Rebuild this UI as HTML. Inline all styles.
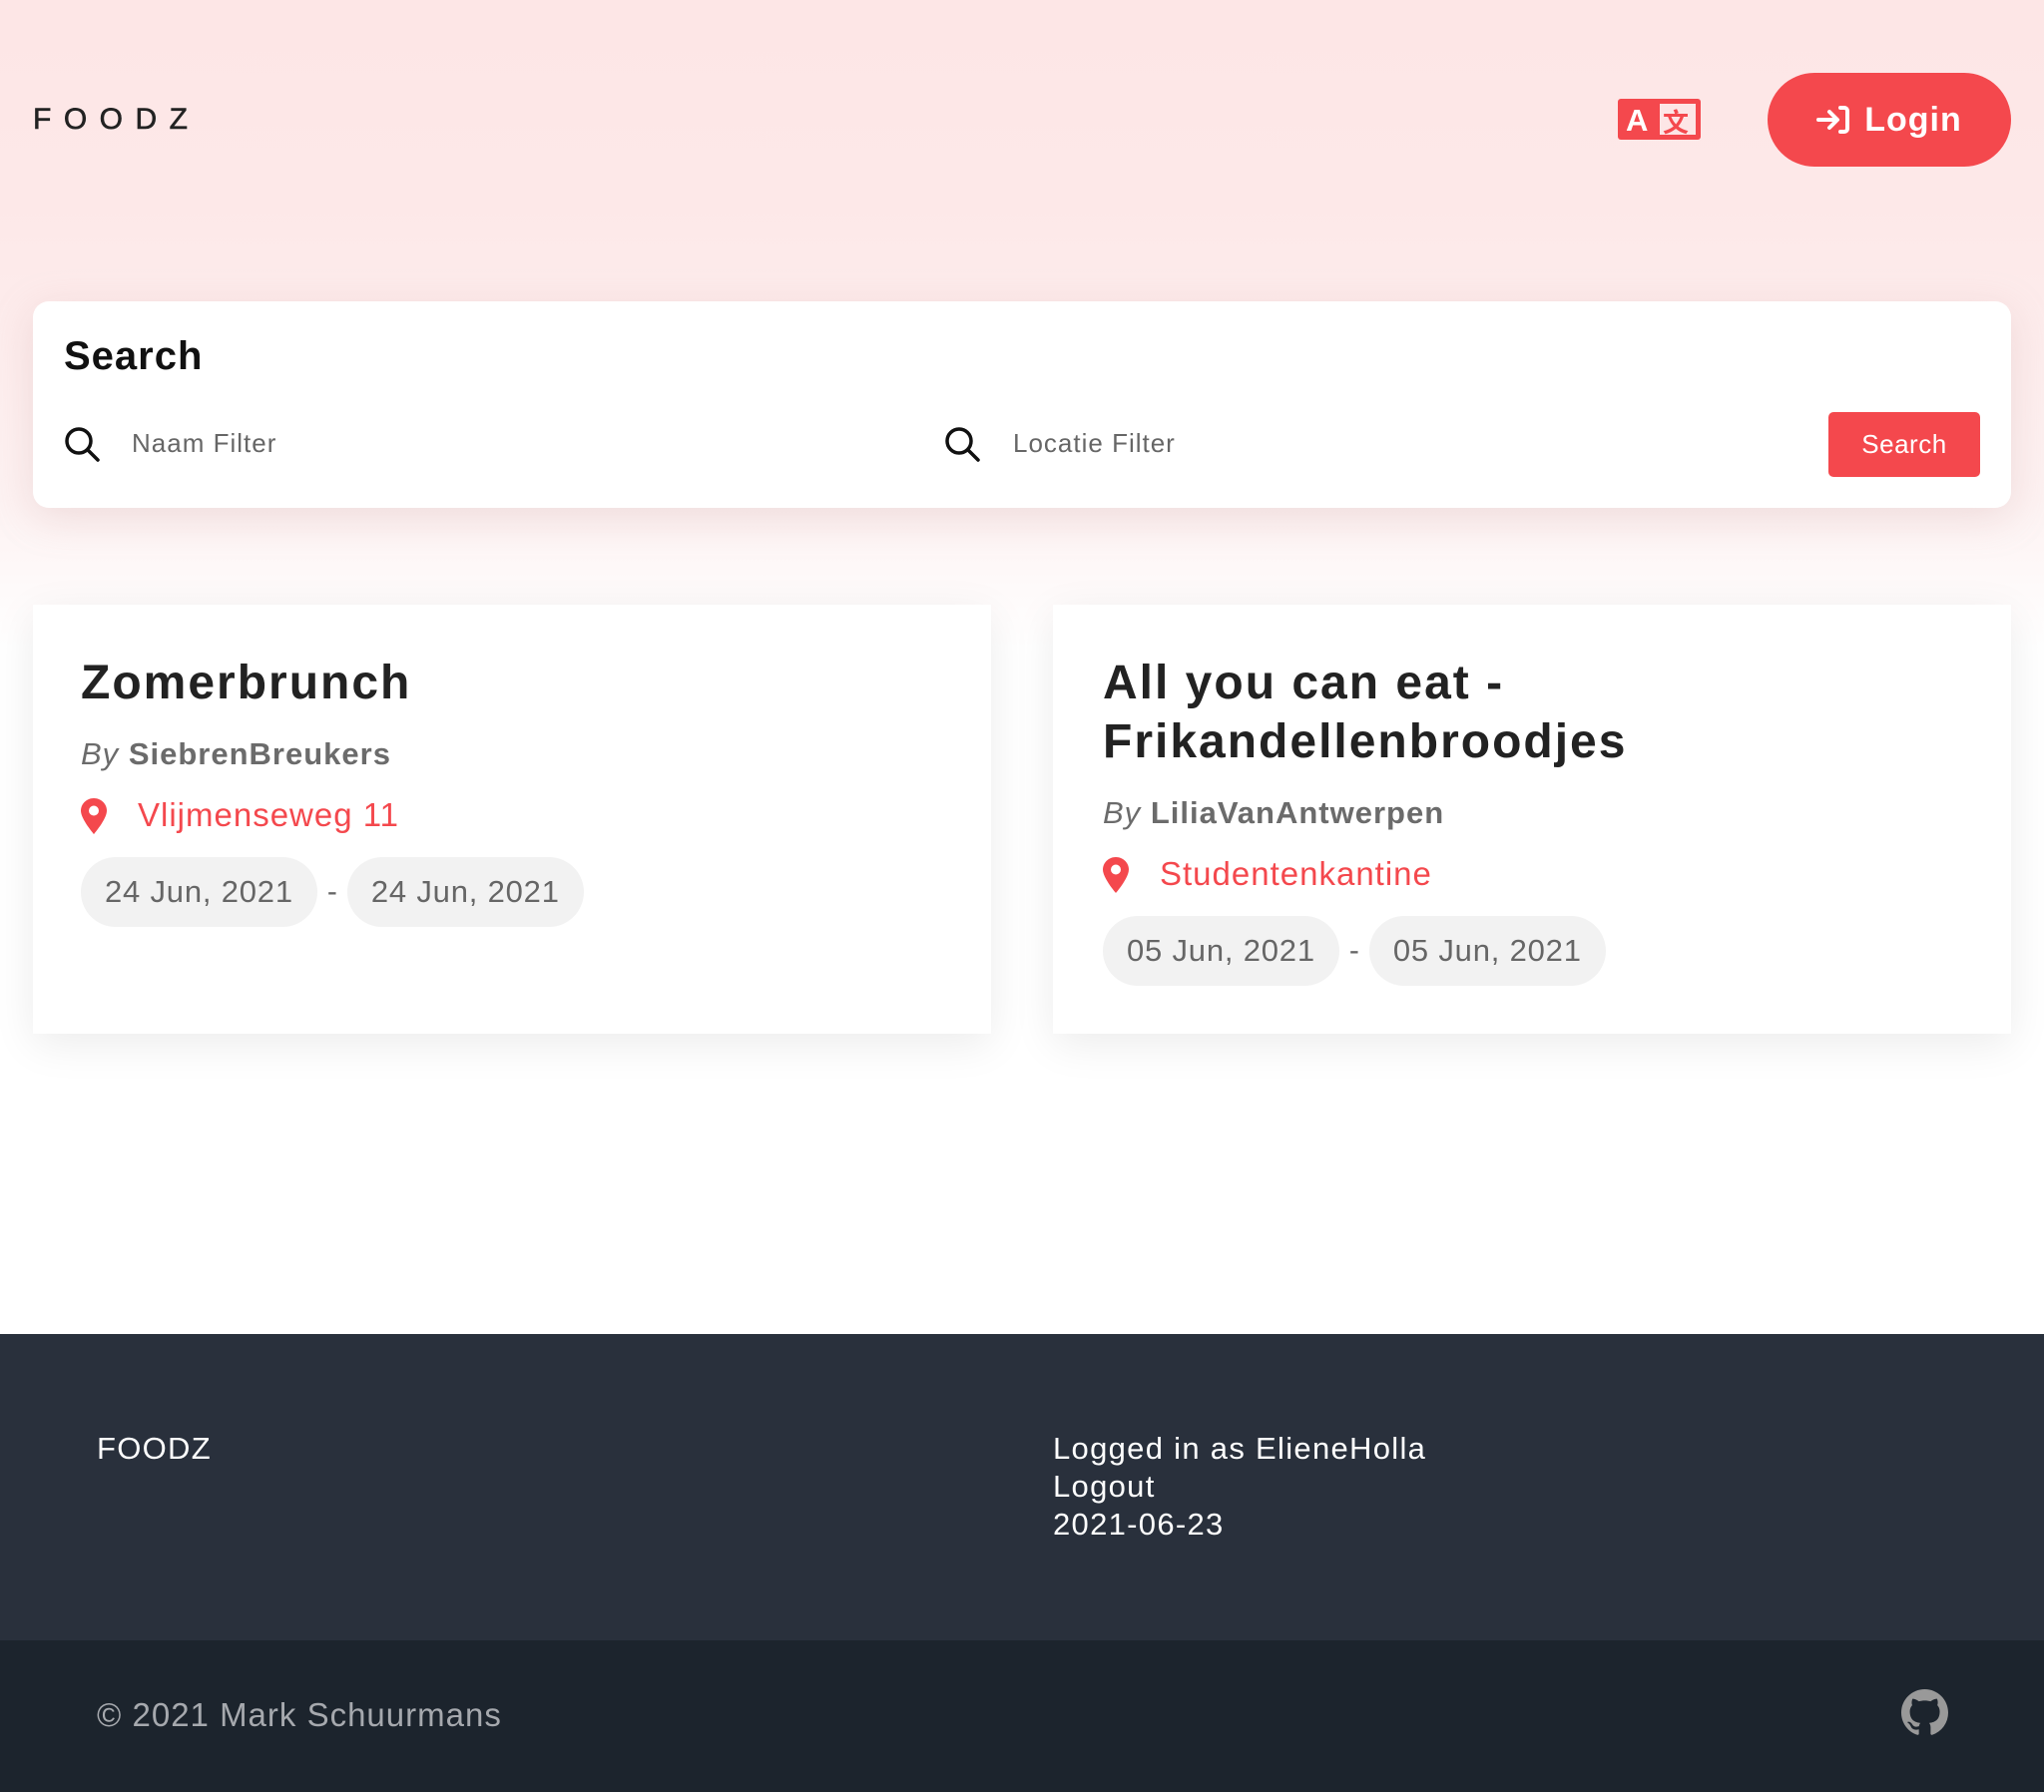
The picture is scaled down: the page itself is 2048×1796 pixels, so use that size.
<!DOCTYPE html>
<html><head><meta charset="utf-8"><style>
*{margin:0;padding:0;box-sizing:border-box}
body{width:2048px;height:1796px;position:relative;font-family:"Liberation Sans",sans-serif;background:#fff;overflow:hidden}
.bg{position:absolute;left:0;top:0;width:2048px;height:1337px;background:linear-gradient(#fde6e6 0px,#fde8e8 200px,#fdf2f2 500px,#fff 650px)}
.a{position:absolute;white-space:nowrap}
.logo{left:33px;top:103px;font-size:30px;letter-spacing:12.5px;color:#222;-webkit-text-stroke:0.6px #222}
.login{left:1771px;top:73px;width:244px;height:94px;border-radius:47px;background:#f4484d;color:#fff;font-size:34px;font-weight:bold;display:flex;align-items:center;justify-content:center;gap:14px;letter-spacing:1px}
.scard{left:33px;top:302px;width:1982px;height:207px;background:#fff;border-radius:16px;box-shadow:0 10px 40px rgba(200,150,150,.25)}
.stitle{left:64px;top:335px;font-size:40px;font-weight:bold;color:#111;letter-spacing:1px}
.ph{font-size:26px;color:#666;top:429px;letter-spacing:1px}
.sbtn{left:1832px;top:413px;width:152px;height:65px;background:#f4484d;border-radius:5px;color:#fff;font-size:26px;display:flex;align-items:center;justify-content:center;letter-spacing:.5px}
.card{top:606px;width:960px;height:430px;background:#fff;box-shadow:0 10px 40px rgba(0,0,0,.08)}
.ct{font-size:48px;font-weight:bold;color:#222;line-height:59px;letter-spacing:2px}
.by{font-size:31px;color:#6b6b6b;letter-spacing:1px}
.loc{font-size:33px;color:#f4484d;letter-spacing:1px}
.pill{height:70px;padding:0 24px;border-radius:35px;background:#f2f2f2;color:#666;font-size:31px;display:flex;align-items:center;letter-spacing:.8px}
.dash{font-size:30px;color:#666}
.f1{left:0;top:1337px;width:2048px;height:307px;background:#29303c}
.f2{left:0;top:1644px;width:2048px;height:152px;background:#1c242d}
.ft{color:#fff;font-size:31px;line-height:38px;letter-spacing:1.3px}
</style></head><body>
<div class="bg"></div>
<div class="a logo">FOODZ</div>
<div class="a" style="left:1621px;top:99px;width:83px;height:41px;background:#f4484d;border-radius:3px">
<span class="a" style="left:8px;top:4px;font-size:31px;font-weight:bold;color:#fff">A</span>
<div class="a" style="left:42px;top:5px;width:36px;height:31px;background:#fde6e6"></div>
<span class="a" style="left:45px;top:4px;font-size:26px;font-weight:bold;color:#f4484d;font-family:'Noto Sans CJK SC',sans-serif">文</span>
</div>
<div class="a login"><svg width="34" height="30" viewBox="0 0 34 30" fill="none" stroke="#fff" stroke-width="4" stroke-linecap="round" stroke-linejoin="round"><path d="M2 15h18M13 7l8 8-8 8M24 3h4a3 3 0 0 1 3 3v18a3 3 0 0 1-3 3h-4"/></svg>Login</div>
<div class="a scard"></div>
<div class="a stitle">Search</div>
<svg class="a" style="left:64px;top:427px" width="36" height="36" viewBox="0 0 36 36" fill="none" stroke="#111" stroke-width="3.5"><circle cx="15" cy="15" r="12"/><path d="M24 24l10 10" stroke-linecap="round"/></svg>
<div class="a ph" style="left:132px">Naam Filter</div>
<svg class="a" style="left:946px;top:427px" width="36" height="36" viewBox="0 0 36 36" fill="none" stroke="#111" stroke-width="3.5"><circle cx="15" cy="15" r="12"/><path d="M24 24l10 10" stroke-linecap="round"/></svg>
<div class="a ph" style="left:1015px">Locatie Filter</div>
<div class="a sbtn">Search</div>

<div class="a card" style="left:33px"></div>
<div class="a ct" style="left:81px;top:655px">Zomerbrunch</div>
<div class="a by" style="left:81px;top:738px"><i>By</i> <b>SiebrenBreukers</b></div>
<svg class="a" style="left:81px;top:800px" width="26" height="36" viewBox="0 0 26 36"><path d="M13 0C6 0 0 5.5 0 12.5 0 21 13 36 13 36s13-15 13-23.5C26 5.5 20 0 13 0z" fill="#f4484d"/><circle cx="13" cy="12.5" r="5" fill="#fff"/></svg>
<div class="a loc" style="left:138px;top:798px">Vlijmenseweg 11</div>
<div class="a" style="left:81px;top:859px;display:flex;align-items:center;gap:10px"><div class="pill">24 Jun, 2021</div><span class="dash">-</span><div class="pill">24 Jun, 2021</div></div>

<div class="a card" style="left:1055px"></div>
<div class="a ct" style="left:1105px;top:655px">All you can eat -<br>Frikandellenbroodjes</div>
<div class="a by" style="left:1105px;top:797px"><i>By</i> <b>LiliaVanAntwerpen</b></div>
<svg class="a" style="left:1105px;top:859px" width="26" height="36" viewBox="0 0 26 36"><path d="M13 0C6 0 0 5.5 0 12.5 0 21 13 36 13 36s13-15 13-23.5C26 5.5 20 0 13 0z" fill="#f4484d"/><circle cx="13" cy="12.5" r="5" fill="#fff"/></svg>
<div class="a loc" style="left:1162px;top:857px">Studentenkantine</div>
<div class="a" style="left:1105px;top:918px;display:flex;align-items:center;gap:10px"><div class="pill">05 Jun, 2021</div><span class="dash">-</span><div class="pill">05 Jun, 2021</div></div>

<div class="a f1"></div>
<div class="a f2"></div>
<div class="a ft" style="left:97px;top:1433px">FOODZ</div>
<div class="a ft" style="left:1055px;top:1433px">Logged in as ElieneHolla<br>Logout<br>2021-06-23</div>
<div class="a" style="left:97px;top:1700px;font-size:33px;color:#a6a9ae;letter-spacing:1px">© 2021 Mark Schuurmans</div>
<svg class="a" style="left:1905px;top:1693px" width="47" height="47" viewBox="0 0 16 16"><path fill="#999" d="M8 0C3.58 0 0 3.58 0 8c0 3.540 2.290 6.530 5.470 7.590.4.07.55-.17.55-.38 0-.19-.01-.82-.01-1.490-2.010.37-2.530-.49-2.690-.94-.09-.23-.48-.94-.82-1.130-.28-.15-.68-.52-.01-.53.63-.01 1.080.58 1.230.82.72 1.210 1.870.87 2.330.66.07-.52.28-.87.51-1.070-1.780-.2-3.640-.89-3.640-3.950 0-.87.31-1.590.82-2.150-.08-.2-.36-1.020.08-2.120 0 0 .67-.21 2.200.82.64-.18 1.320-.27 2-.27.68 0 1.360.09 2 .27 1.530-1.040 2.200-.82 2.200-.82.44 1.100.16 1.920.08 2.120.51.56.82 1.270.82 2.150 0 3.070-1.870 3.750-3.650 3.950.29.25.54.73.54 1.480 0 1.070-.01 1.930-.01 2.200 0 .21.15.46.55.38A8.013 8.013 0 0016 8c0-4.420-3.580-8-8-8z"/></svg>
</body></html>
